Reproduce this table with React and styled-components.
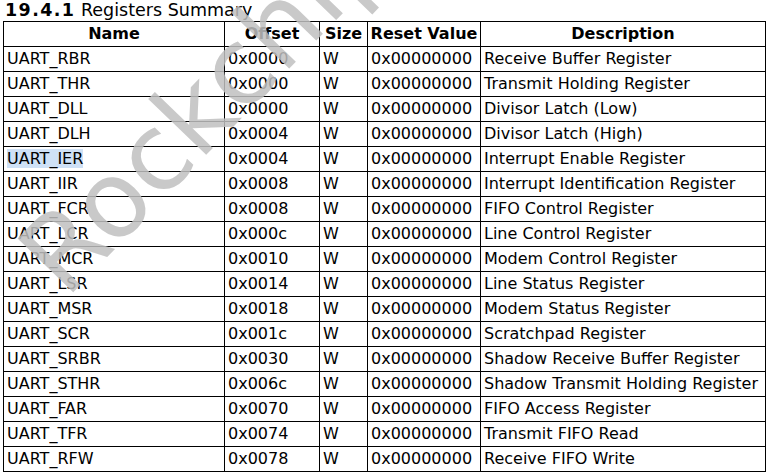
import React from 'react'
import styled, { createGlobalStyle } from 'styled-components'

const rows = [
  ['UART_RBR', '0x0000', 'Receive Buffer Register'],
  ['UART_THR', '0x0000', 'Transmit Holding Register'],
  ['UART_DLL', '0x0000', 'Divisor Latch (Low)'],
  ['UART_DLH', '0x0004', 'Divisor Latch (High)'],
  ['UART_IER', '0x0004', 'Interrupt Enable Register', true],
  ['UART_IIR', '0x0008', 'Interrupt Identification Register'],
  ['UART_FCR', '0x0008', 'FIFO Control Register'],
  ['UART_LCR', '0x000c', 'Line Control Register'],
  ['UART_MCR', '0x0010', 'Modem Control Register'],
  ['UART_LSR', '0x0014', 'Line Status Register'],
  ['UART_MSR', '0x0018', 'Modem Status Register'],
  ['UART_SCR', '0x001c', 'Scratchpad Register'],
  ['UART_SRBR', '0x0030', 'Shadow Receive Buffer Register'],
  ['UART_STHR', '0x006c', 'Shadow Transmit Holding Register'],
  ['UART_FAR', '0x0070', 'FIFO Access Register'],
  ['UART_TFR', '0x0074', 'Transmit FIFO Read'],
  ['UART_RFW', '0x0078', 'Receive FIFO Write'],
]

export default function App() {
  return (
    <>
      <GlobalStyle />
      <Page>
        <Title>
          <b>19.4.1</b> Registers Summary
        </Title>
        <Table>
          <colgroup>
            <col style={{ width: 221 }} />
            <col style={{ width: 95 }} />
            <col style={{ width: 48 }} />
            <col style={{ width: 113 }} />
            <col style={{ width: 285 }} />
          </colgroup>
          <thead>
            <tr>
              <Head>Name</Head>
              <Head>Offset</Head>
              <Head>Size</Head>
              <Head>Reset Value</Head>
              <Head>Description</Head>
            </tr>
          </thead>
          <tbody>
            {rows.map(([name, offset, desc, selected]) => (
              <tr key={name}>
                <Cell>{selected ? <Selected>{name}</Selected> : name}</Cell>
                <Cell>{offset}</Cell>
                <Cell>W</Cell>
                <Cell>0x00000000</Cell>
                <Cell>{desc}</Cell>
              </tr>
            ))}
          </tbody>
        </Table>
        <Watermark>Rockchip</Watermark>
      </Page>
    </>
  )
}

const GlobalStyle = createGlobalStyle`
  html, body {
    margin: 0;
    background: #fff;
  }
`

const Page = styled.div`
  position: relative;
  width: 769px;
  height: 473px;
  overflow: hidden;
  padding: 0 0 0 3px;
  box-sizing: border-box;
  font-family: 'DejaVu Sans', Verdana, sans-serif;
  color: #000;
`

const Title = styled.div`
  height: 21px;
  font-size: 17.5px;
  line-height: 20px;
  padding-left: 2px;
  white-space: nowrap;
  b {
    font-weight: bold;
    letter-spacing: 1.4px;
  }
`

const Table = styled.table`
  border-collapse: collapse;
  table-layout: fixed;
  width: 763px;
  font-size: 16px;
`

const Head = styled.th`
  height: 24px;
  padding: 0;
  border: 1px solid #000;
  font-weight: bold;
  text-align: center;
  line-height: 22px;
  white-space: nowrap;
  overflow: hidden;
`

const Cell = styled.td`
  height: 24px;
  padding: 0 3px;
  border: 1px solid #000;
  line-height: 22px;
  white-space: nowrap;
`

const Selected = styled.span`
  background: #cfe1f6;
`

const Watermark = styled.div`
  position: absolute;
  left: 2px;
  top: 238px;
  font-family: 'DejaVu Sans', sans-serif;
  font-size: 106px;
  font-weight: 400;
  line-height: 1;
  color: rgba(192, 192, 192, 0.85);
  transform: rotate(-46deg);
  transform-origin: 0 0;
  pointer-events: none;
  white-space: nowrap;
`
